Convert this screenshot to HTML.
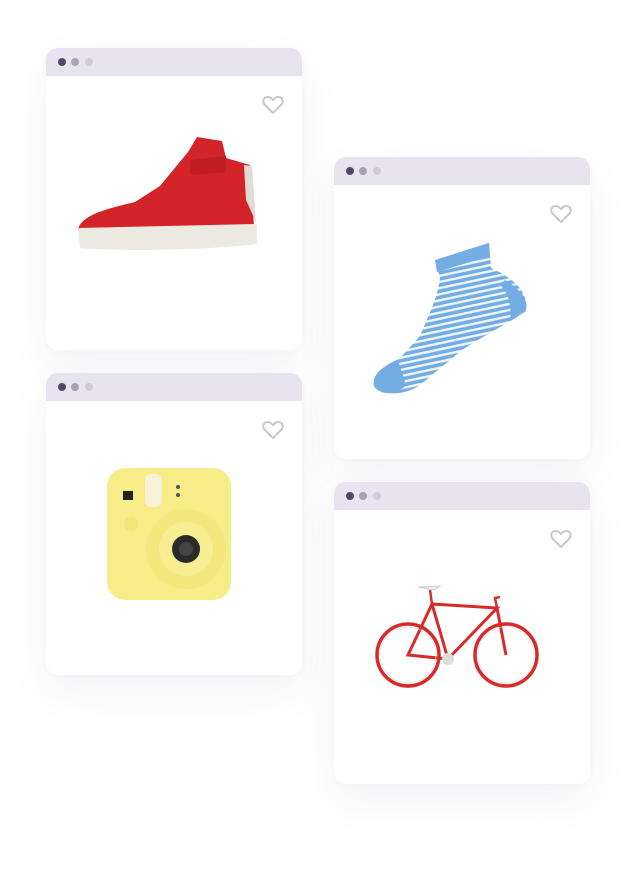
<!DOCTYPE html>
<html><head><meta charset="utf-8"><style>
body{margin:0;width:640px;height:883px;background:#fff;position:relative;overflow:hidden;font-family:"Liberation Sans",sans-serif}
.card{position:absolute;width:256px;height:302px;background:#fff;border-radius:12px;overflow:hidden;box-shadow:0 16px 44px rgba(60,50,110,0.06),0 2px 8px rgba(60,50,110,0.025)}
.bar{height:28px;background:#e7e4ef;position:relative}
.d{position:absolute;top:10px;width:8px;height:8px;border-radius:50%}
.d1{left:12px;background:#52496a}.d2{left:25px;background:#a7a1b5}.d3{left:39px;background:#cfcbd9}
.heart{position:absolute;right:18px;top:47px}
</style></head><body>
<div class="card" style="left:46px;top:48px"><div class="bar"><i class="d d1"></i><i class="d d2"></i><i class="d d3"></i></div>
<svg class="heart" width="22" height="20" viewBox="0 0 22 20"><path d="M11 18 L3 10 C0 7 1 2 6 2 C8.5 2 10 4 11 5 C12 4 13.5 2 16 2 C21 2 22 7 19 10 Z" fill="none" stroke="#c9c5d0" stroke-width="2" stroke-linejoin="round"/></svg></div>
<div class="card" style="left:334px;top:157px"><div class="bar"><i class="d d1"></i><i class="d d2"></i><i class="d d3"></i></div>
<svg class="heart" width="22" height="20" viewBox="0 0 22 20"><path d="M11 18 L3 10 C0 7 1 2 6 2 C8.5 2 10 4 11 5 C12 4 13.5 2 16 2 C21 2 22 7 19 10 Z" fill="none" stroke="#c9c5d0" stroke-width="2" stroke-linejoin="round"/></svg></div>
<div class="card" style="left:46px;top:373px"><div class="bar"><i class="d d1"></i><i class="d d2"></i><i class="d d3"></i></div>
<svg class="heart" width="22" height="20" viewBox="0 0 22 20"><path d="M11 18 L3 10 C0 7 1 2 6 2 C8.5 2 10 4 11 5 C12 4 13.5 2 16 2 C21 2 22 7 19 10 Z" fill="none" stroke="#c9c5d0" stroke-width="2" stroke-linejoin="round"/></svg></div>
<div class="card" style="left:334px;top:482px"><div class="bar"><i class="d d1"></i><i class="d d2"></i><i class="d d3"></i></div>
<svg class="heart" width="22" height="20" viewBox="0 0 22 20"><path d="M11 18 L3 10 C0 7 1 2 6 2 C8.5 2 10 4 11 5 C12 4 13.5 2 16 2 C21 2 22 7 19 10 Z" fill="none" stroke="#c9c5d0" stroke-width="2" stroke-linejoin="round"/></svg></div>

<svg style="position:absolute;left:0;top:0" width="640" height="883">
<defs>
<pattern id="st" width="6" height="6" patternUnits="userSpaceOnUse" patternTransform="rotate(-12)">
<rect width="6" height="6" fill="#74ade3"/><rect y="0" width="6" height="2.4" fill="#eef6fd"/></pattern>
</defs>
<!-- sneaker -->
<path d="M78,230 C80,215 110,208 135,202 L160,186 L188,152 L197,137 L222,141 L226,158 L250,165 L254,226 Z" fill="#d3242a"/>
<path d="M190,160 L226,156 L226,172 L190,175 Z" fill="#c01d23"/>
<path d="M244,165 L252,166 L256,222 L246,200 Z" fill="#e1ddd6"/>
<path d="M78,228 L257,224 L257,244 C200,251 110,251 80,248 Z" fill="#ece9e1"/>
<!-- sock -->
<path d="M435,260 L489,243 L491,268 C518,280 530,296 525,312 C505,325 485,335 462,350 L420,385 C405,396 380,396 374,386 C372,372 385,366 400,358 L420,336 C430,312 438,296 440,278 Z" fill="url(#st)"/>
<path d="M435,260 L489,243 L490,256 L437,272 Z" fill="#74ade3"/>
<path d="M374,386 C372,372 385,366 398,360 L406,385 C398,395 380,396 374,386 Z" fill="#74ade3"/>
<path d="M505,280 C522,290 530,302 525,312 L510,320 C512,305 508,292 500,285 Z" fill="#74ade3"/>
<!-- camera -->
<rect x="107" y="468" width="124" height="132" rx="18" fill="#f6ec88"/>
<rect x="145" y="474" width="17" height="33" rx="6" fill="#f8f3d8"/>
<rect x="123" y="491" width="10" height="9" fill="#222"/>
<circle cx="131" cy="524" r="7" fill="#f1e57a"/>
<circle cx="178" cy="487" r="2" fill="#555"/><circle cx="178" cy="495" r="2" fill="#555"/>
<circle cx="186" cy="549" r="40" fill="#f3e87c"/>
<circle cx="186" cy="549" r="27" fill="#f7ee92"/>
<circle cx="186" cy="549" r="14" fill="#2a2a2a"/>
<circle cx="186" cy="549" r="7" fill="#444"/>
<!-- bike -->
<g fill="none" stroke="#d92a2a">
<circle cx="408" cy="655" r="31" stroke-width="3.5"/>
<circle cx="506" cy="655" r="31" stroke-width="3.5"/>
<path d="M408,655 L448,659 L432,604 Z M432,604 L497,608 L448,659 M497,608 L506,655" stroke-width="3"/>
<path d="M432,604 L430,590 M497,608 L495,598 L500,597" stroke-width="2.5" stroke="#c33"/>
</g>
<g stroke="#ddd" stroke-width="0.6" fill="none"><circle cx="408" cy="655" r="28"/><circle cx="506" cy="655" r="28"/></g>
<path d="M418,587 L440,586 L434,590 Z" fill="#eee" stroke="#ccc"/>
<circle cx="448" cy="659" r="6" fill="#ddd"/>
</svg>
</body></html>
